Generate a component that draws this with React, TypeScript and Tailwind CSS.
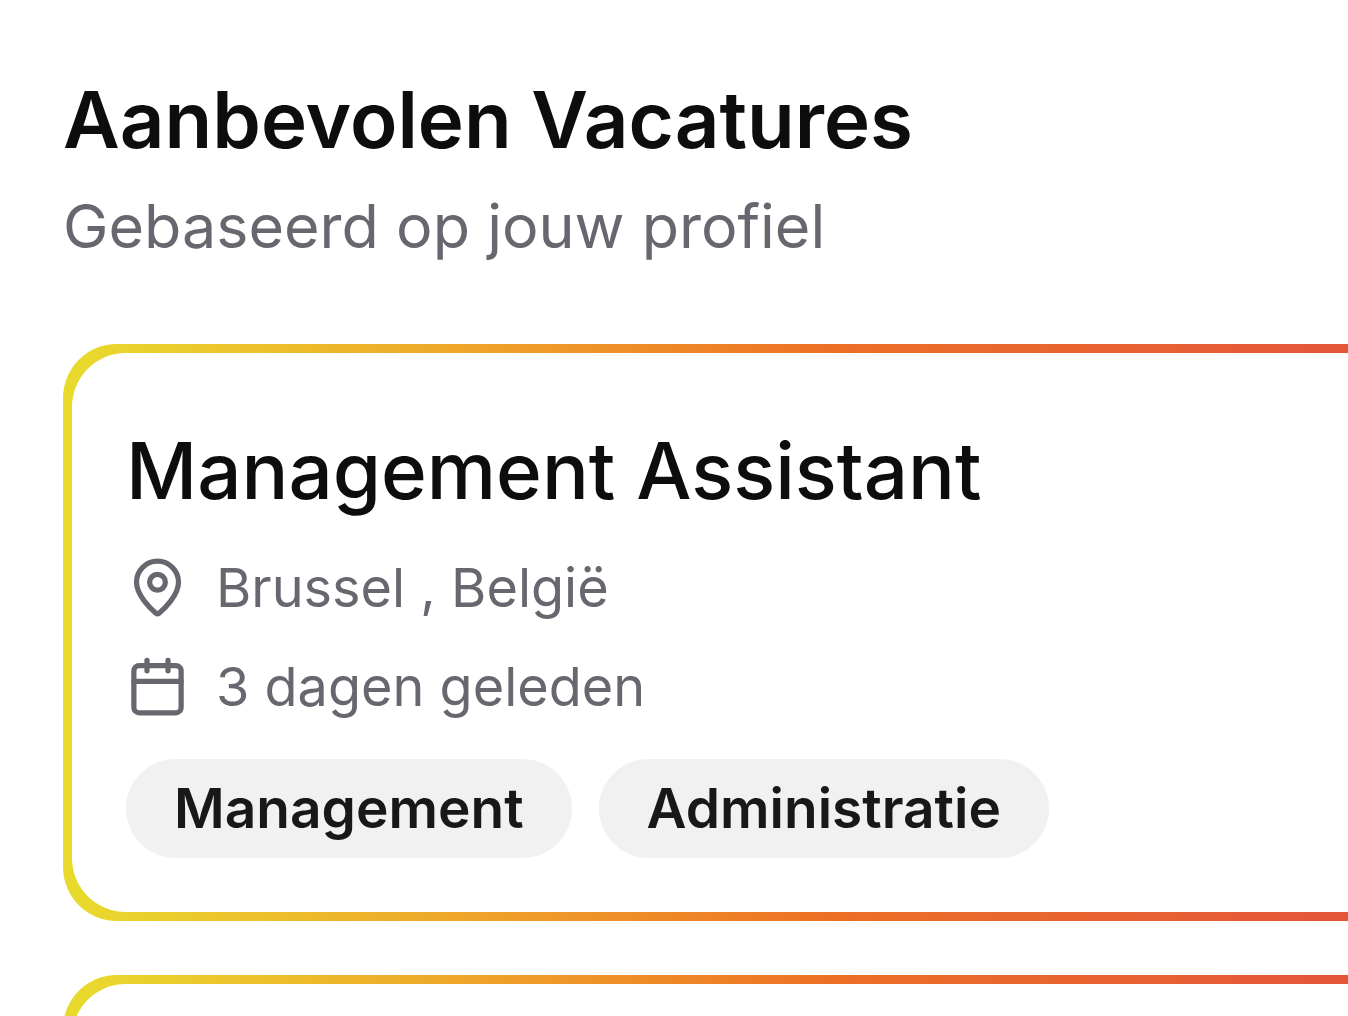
import { Calendar, MapPin } from "lucide-react";

type Job = { title: string; location: string; posted: string; tags: string[] };

const jobs: Job[] = [
  {
    title: "Management Assistant",
    location: "Brussel , België",
    posted: "3 dagen geleden",
    tags: ["Management", "Administratie"],
  },
];

function JobCard({ job }: { job?: Job }) {
  return (
    <article className="min-h-[577px] rounded-l-[54px] bg-linear-to-r from-[#e8db2d] via-[#ec6f25] via-60% to-[#e5563a] py-[9px] pl-[9px]">
      <div className="min-h-[559px] rounded-l-[54px] bg-white px-[54px] pt-[72px] pb-[54px]">
        {job && (
          <>
            <h2 className="text-[78px] leading-[92px] font-medium text-[#0d0d0d]">{job.title}</h2>
            <div className="mt-[21px] flex h-[99px] items-center gap-[27px] text-[54px] text-[#68676f]">
              <MapPin size={63} strokeWidth={2} />
              <span>{job.location}</span>
            </div>
            <div className="flex h-[99px] items-center gap-[27px] text-[54px] text-[#68676f]">
              <Calendar size={63} strokeWidth={2} />
              <span>{job.posted}</span>
            </div>
            <ul className="mt-[23px] flex gap-[27px]">
              {job.tags.map((tag) => (
                <li key={tag} className="flex h-[99px] items-center rounded-full bg-[#f1f1f1] px-12 text-[55px] font-semibold text-[#18181b]">
                  {tag}
                </li>
              ))}
            </ul>
          </>
        )}
      </div>
    </article>
  );
}

export default function App() {
  return (
    <main className="h-screen overflow-hidden bg-white pt-[72px] pl-[63px] font-['Inter',sans-serif]">
      <h1 className="text-[78px] leading-[96px] font-semibold text-[#0d0d0d]">Aanbevolen Vacatures</h1>
      <p className="mt-3 text-[61px] leading-[92px] text-[#68676f]">Gebaseerd op jouw profiel</p>
      <section className="mt-[72px] flex flex-col gap-[54px]">
        <JobCard job={jobs[0]} />
        <JobCard />
      </section>
    </main>
  );
}
